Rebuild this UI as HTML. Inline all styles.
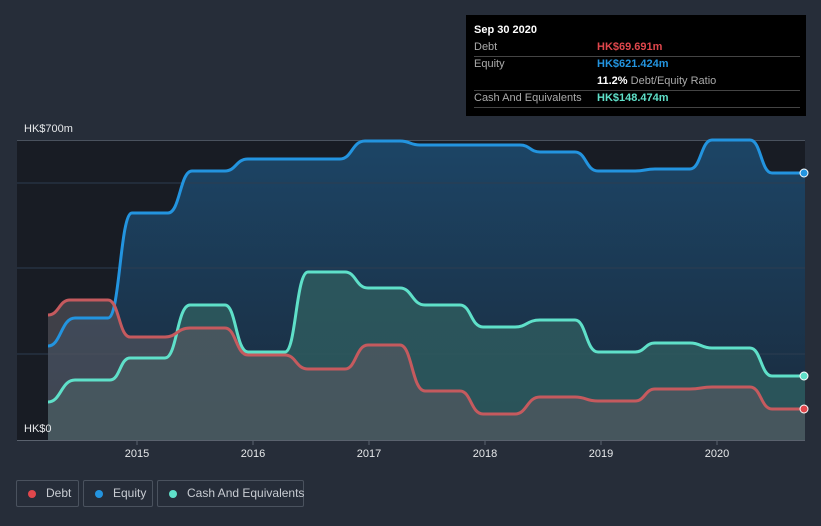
<!DOCTYPE html>
<html><head><meta charset="utf-8"><style>
html,body{margin:0;width:821px;height:526px;overflow:hidden}
body{background:#262d39;font-family:"Liberation Sans",sans-serif;position:relative}
.tt{position:absolute;left:466px;top:15px;width:340px;height:101px;background:#000;color:#ccc;font-size:11px}
.row{position:absolute;left:8px;right:6px;border-bottom:1px solid #444;height:17px;line-height:17px}
.leg{position:absolute;top:480px;height:27px;border:1px solid #4a525e;border-radius:2px;color:#c8ccd2;font-size:12px;line-height:25px;box-sizing:border-box;white-space:nowrap}
.dot{display:inline-block;width:8px;height:8px;border-radius:50%;margin:0 10px 0 11px;vertical-align:-1px}
</style></head><body>
<svg width="821" height="526" style="position:absolute;left:0;top:0">
<defs>
<linearGradient id="ge" x1="0" y1="0" x2="0" y2="1"><stop offset="0" stop-color="#1c4566"/><stop offset="1" stop-color="#1a2a3c"/></linearGradient>
</defs>
<rect x="17" y="140" width="788" height="300" fill="#181c24"/>
<path d="M48,346 C61,346 61,318 75,318 L108,318 C120,318 120,213 132,213 L168,213 C180,213 180,171 192,171 L225,171 C236,171 236,159 248,159 L340,159 C352,159 352,141 365,141 L400,141 C410,141 410,145 420,145 L520,145 C530,145 530,152 540,152 L575,152 C586,152 586,171 598,171 L635,171 C645,171 645,169 655,169 L690,169 C701,169 701,140 712,140 L750,140 C761,140 761,173 772,173 L805,173 L805,440 L48,440Z" fill="url(#ge)"/>
<g stroke="#2c3d50" stroke-width="1"><line x1="17" y1="183" x2="805" y2="183"/><line x1="17" y1="268" x2="805" y2="268"/><line x1="17" y1="354" x2="805" y2="354"/></g>
<line x1="17" y1="140.5" x2="805" y2="140.5" stroke="#4a525e"/>
<path d="M48,402 C61,402 61,380 75,380 L110,380 C120,380 120,358 130,358 L165,358 C177,358 177,305 190,305 L225,305 C236,305 236,352 248,352 L285,352 C296,352 296,272 308,272 L345,272 C356,272 356,288 368,288 L400,288 C412,288 412,305 425,305 L460,305 C471,305 471,327 483,327 L515,327 C527,327 527,320 540,320 L575,320 C586,320 586,352 598,352 L635,352 C645,352 645,343 655,343 L690,343 C701,343 701,348 712,348 L750,348 C761,348 761,376 772,376 L805,376 L805,440 L48,440Z" fill="#2e5a5e" fill-opacity="0.85"/>
<path d="M48,315 C59,315 59,300 70,300 L108,300 C119,300 119,337 130,337 L165,337 C177,337 177,328 190,328 L225,328 C236,328 236,355 248,355 L285,355 C296,355 296,369 308,369 L345,369 C356,369 356,345 368,345 L400,345 C412,345 412,391 425,391 L460,391 C471,391 471,414 483,414 L515,414 C527,414 527,397 540,397 L575,397 C586,397 586,401 598,401 L635,401 C645,401 645,389 655,389 L690,389 C701,389 701,387 712,387 L750,387 C761,387 761,409 772,409 L805,409 L805,440 L48,440Z" fill="#5a5860" fill-opacity="0.6"/>
<g fill="none" stroke-width="3">
<path d="M48,346 C61,346 61,318 75,318 L108,318 C120,318 120,213 132,213 L168,213 C180,213 180,171 192,171 L225,171 C236,171 236,159 248,159 L340,159 C352,159 352,141 365,141 L400,141 C410,141 410,145 420,145 L520,145 C530,145 530,152 540,152 L575,152 C586,152 586,171 598,171 L635,171 C645,171 645,169 655,169 L690,169 C701,169 701,140 712,140 L750,140 C761,140 761,173 772,173 L805,173" stroke="#2394df"/>
<path d="M48,402 C61,402 61,380 75,380 L110,380 C120,380 120,358 130,358 L165,358 C177,358 177,305 190,305 L225,305 C236,305 236,352 248,352 L285,352 C296,352 296,272 308,272 L345,272 C356,272 356,288 368,288 L400,288 C412,288 412,305 425,305 L460,305 C471,305 471,327 483,327 L515,327 C527,327 527,320 540,320 L575,320 C586,320 586,352 598,352 L635,352 C645,352 645,343 655,343 L690,343 C701,343 701,348 712,348 L750,348 C761,348 761,376 772,376 L805,376" stroke="#5fe0c9"/>
<path d="M48,315 C59,315 59,300 70,300 L108,300 C119,300 119,337 130,337 L165,337 C177,337 177,328 190,328 L225,328 C236,328 236,355 248,355 L285,355 C296,355 296,369 308,369 L345,369 C356,369 356,345 368,345 L400,345 C412,345 412,391 425,391 L460,391 C471,391 471,414 483,414 L515,414 C527,414 527,397 540,397 L575,397 C586,397 586,401 598,401 L635,401 C645,401 645,389 655,389 L690,389 C701,389 701,387 712,387 L750,387 C761,387 761,409 772,409 L805,409" stroke="#c55a5e"/>
</g>
<circle cx="804" cy="173" r="4" fill="#2394df" stroke="#fff" stroke-width="1"/>
<circle cx="804" cy="376" r="4" fill="#5fe0c9" stroke="#fff" stroke-width="1"/>
<circle cx="804" cy="409" r="4" fill="#e0474c" stroke="#fff" stroke-width="1"/>
<line x1="17" y1="440.5" x2="805" y2="440.5" stroke="#5a626e"/>
<g stroke="#5a626e"><line x1="137" y1="441" x2="137" y2="445"/><line x1="253" y1="441" x2="253" y2="445"/><line x1="369" y1="441" x2="369" y2="445"/><line x1="485" y1="441" x2="485" y2="445"/><line x1="601" y1="441" x2="601" y2="445"/><line x1="717" y1="441" x2="717" y2="445"/></g>
<g fill="#e6e8ea" font-size="11" text-anchor="middle" font-family="Liberation Sans"><text x="137" y="457">2015</text><text x="253" y="457">2016</text><text x="369" y="457">2017</text><text x="485" y="457">2018</text><text x="601" y="457">2019</text><text x="717" y="457">2020</text></g>
<text x="24" y="132" fill="#e6e8ea" font-size="11" font-family="Liberation Sans">HK$700m</text>
<text x="24" y="432" fill="#e6e8ea" font-size="11" font-family="Liberation Sans">HK$0</text>
</svg>
<div class="tt">
<div style="position:absolute;left:8px;top:9px;color:#fff;font-weight:bold;font-size:11px">Sep 30 2020</div>
<div class="row" style="top:24px"><span style="color:#aaa">Debt</span><span style="position:absolute;left:123px;color:#e0474c;font-weight:bold">HK$69.691m</span></div>
<div class="row" style="top:41px;border:none"><span style="color:#aaa">Equity</span><span style="position:absolute;left:123px;color:#2394df;font-weight:bold">HK$621.424m</span></div>
<div class="row" style="top:58px"><span style="position:absolute;left:123px"><b style="color:#fff">11.2%</b> <span style="color:#aaa">Debt/Equity Ratio</span></span></div>
<div class="row" style="top:75px"><span style="color:#aaa">Cash And Equivalents</span><span style="position:absolute;left:123px;color:#5fe0c9;font-weight:bold">HK$148.474m</span></div>
</div>
<div class="leg" style="left:16px;width:63px"><span class="dot" style="background:#e0474c"></span>Debt</div>
<div class="leg" style="left:83px;width:70px"><span class="dot" style="background:#2394df"></span>Equity</div>
<div class="leg" style="left:157px;width:147px"><span class="dot" style="background:#5fe0c9"></span>Cash And Equivalents</div>
</body></html>
